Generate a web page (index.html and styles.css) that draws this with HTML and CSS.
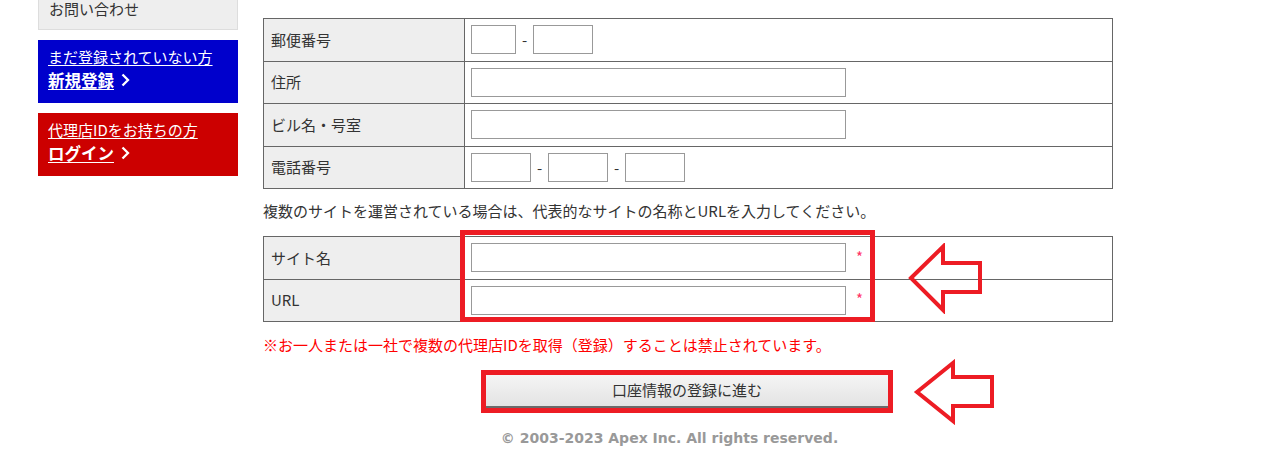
FILE: index.html
```html
<!DOCTYPE html>
<html lang="ja">
<head>
<meta charset="utf-8">
<title>代理店登録</title>
<link rel="stylesheet" href="styles.css">
</head>
<body>
<div class="page">
  <aside class="sidebar">
    <div class="contact">お問い合わせ</div>
    <a class="promo promo-blue" href="#">
      <span class="promo-sub">まだ登録されていない方</span>
      <span class="promo-main"><span class="promo-title">新規登録</span><svg class="chev" viewBox="0 0 9 14" width="9" height="14"><path d="M1.5 1.5 L7 7 L1.5 12.5" fill="none" stroke="#fff" stroke-width="2.3"/></svg></span>
    </a>
    <a class="promo promo-red" href="#">
      <span class="promo-sub">代理店IDをお持ちの方</span>
      <span class="promo-main"><span class="promo-title">ログイン</span><svg class="chev" viewBox="0 0 9 14" width="9" height="14"><path d="M1.5 1.5 L7 7 L1.5 12.5" fill="none" stroke="#fff" stroke-width="2.3"/></svg></span>
    </a>
  </aside>
  <main class="main">
    <table class="form-table">
      <tr>
        <th>郵便番号</th>
        <td><div class="fields"><input class="in w45" type="text"><span class="dash">-</span><input class="in w60" type="text"></div></td>
      </tr>
      <tr>
        <th>住所</th>
        <td><div class="fields"><input class="in w375" type="text"></div></td>
      </tr>
      <tr>
        <th>ビル名・号室</th>
        <td><div class="fields"><input class="in w375" type="text"></div></td>
      </tr>
      <tr>
        <th>電話番号</th>
        <td><div class="fields"><input class="in w60" type="text"><span class="dash">-</span><input class="in w60" type="text"><span class="dash">-</span><input class="in w60" type="text"></div></td>
      </tr>
    </table>
    <p class="note">複数のサイトを運営されている場合は、代表的なサイトの名称とURLを入力してください。</p>
    <table class="form-table">
      <tr>
        <th>サイト名</th>
        <td><div class="fields"><input class="in w375" type="text"><span class="req">*</span></div></td>
      </tr>
      <tr>
        <th>URL</th>
        <td><div class="fields"><input class="in w375" type="text"><span class="req">*</span></div></td>
      </tr>
    </table>
    <p class="warn">※お一人または一社で複数の代理店IDを取得（登録）することは禁止されています。</p>
    <div class="actions">
      <button class="submit" type="button">口座情報の登録に進む</button>
    </div>
    <footer class="footer">© 2003-2023 Apex Inc. All rights reserved.</footer>

    <div class="mark-box"></div>
    <svg class="arrow arrow-1" viewBox="0 0 76 71" width="76" height="71"><path d="M3 35 L35 3.7 L35 20 L72 20 L72 49 L35 49 L35 67 Z" fill="none" stroke="#ed1c24" stroke-width="4" stroke-linejoin="miter"/></svg>
    <svg class="arrow arrow-2" viewBox="0 0 84 66" width="84" height="66"><path d="M4 33 L40 4 L40 18 L79 18 L79 47 L40 47 L40 62 Z" fill="none" stroke="#ed1c24" stroke-width="4" stroke-linejoin="miter"/></svg>
  </main>
</div>
</body>
</html>
```

FILE: styles.css
```css
html, body {
  margin: 0;
  padding: 0;
  background: #fff;
}

body {
  font-family: "Noto Sans CJK JP", "Noto Sans", sans-serif;
  font-size: 15px;
  color: #333;
}

.page {
  display: flex;
  gap: 25px;
  padding-left: 38px;
}

.sidebar {
  width: 200px;
  flex: none;
  display: flex;
  flex-direction: column;
  gap: 10px;
}

.contact {
  height: 30px;
  box-sizing: border-box;
  border: 1px solid #ddd;
  border-top: none;
  background: #eee;
  padding-left: 10px;
  line-height: 18px;
  font-size: 15px;
  color: #333;
}

.promo {
  display: flex;
  flex-direction: column;
  height: 63px;
  box-sizing: border-box;
  padding: 6px 10px 0;
  color: #fff;
  text-decoration: none;
}

.promo-blue { background: #0000cc; }
.promo-red { background: #cc0000; }

.promo-sub {
  font-size: 15px;
  line-height: 21px;
  text-decoration: underline;
  text-underline-offset: 2px;
}

.promo-main {
  display: flex;
  align-items: center;
  gap: 7px;
  line-height: 26px;
}

.promo-title {
  font-size: 16.5px;
  font-weight: bold;
  text-decoration: underline;
  text-underline-offset: 2px;
}

.chev { display: block; }

.main {
  position: relative;
  width: 850px;
  flex: none;
  padding-top: 18px;
}

.form-table {
  width: 850px;
  border-collapse: collapse;
  border: 1px solid #666;
}

.form-table th,
.form-table td {
  border: 1px solid #666;
  padding: 6px 6px 6.5px;
  height: 29px;
}

.form-table th {
  width: 187px;
  background: #eee;
  text-align: left;
  font-weight: normal;
  padding-left: 7px;
  font-size: 15px;
  line-height: 20px;
  color: #333;
  vertical-align: middle;
}

.fields {
  display: flex;
  align-items: center;
  gap: 6px;
}

.in {
  box-sizing: border-box;
  height: 29px;
  border: 1px solid #999;
  background: #fff;
  margin: 0;
  padding: 0 4px;
}

.w45 { width: 45px; }
.w60 { width: 60px; }
.w375 { width: 375px; }

.dash {
  font-size: 15px;
  color: #333;
  width: 5px;
  text-align: center;
}

.req {
  margin-left: 4px;
  font-size: 15px;
  color: #ff3366;
  line-height: 12px;
  position: relative;
  top: -1px;
}

.note {
  margin: 0;
  padding: 12px 0 15px;
  line-height: 20px;
  font-size: 15px;
  color: #333;
}

.warn {
  margin: 0;
  padding: 13px 0 0;
  line-height: 20px;
  font-size: 15px;
  color: #f00;
}

.actions {
  display: flex;
  justify-content: center;
  padding-top: 20px;
  padding-right: 2px;
}

.submit {
  width: 402px;
  height: 33px;
  border: none;
  border-bottom: 2px solid #6a6a6a;
  background: linear-gradient(#f5f5f5, #e3e3e3);
  font-family: "Noto Sans CJK JP", "Noto Sans", sans-serif;
  font-size: 15px;
  color: #333;
  outline: 5px solid #ed1c24;
  padding: 0 0 3px;
}

.footer {
  margin-top: 20px;
  padding-right: 37px;
  text-align: center;
  font-family: "DejaVu Sans", Verdana, sans-serif;
  font-weight: bold;
  font-size: 14px;
  line-height: 20px;
  color: #999;
}

.mark-box {
  position: absolute;
  left: 197px;
  top: 230px;
  width: 415px;
  height: 92px;
  box-sizing: border-box;
  border: 5px solid #ed1c24;
}

.arrow {
  position: absolute;
  display: block;
}

.arrow-1 {
  left: 645px;
  top: 243px;
}

.arrow-2 {
  left: 650px;
  top: 359px;
}
```
